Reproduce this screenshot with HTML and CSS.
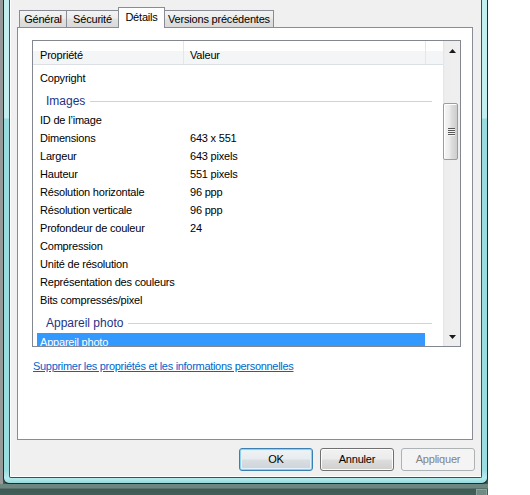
FILE: index.html
```html
<!DOCTYPE html>
<html lang="fr">
<head>
<meta charset="utf-8">
<title>Propriétés</title>
<link rel="stylesheet" href="styles.css">
</head>
<body>
<div class="stage">
  <div class="top">
    <div class="desk"></div>
    <div class="window">
      <div class="dialog">
        <div class="tabs">
          <div class="tab w-gen">Général</div>
          <div class="tab w-sec">Sécurité</div>
          <div class="tab sel w-det">Détails</div>
          <div class="tab w-ver">Versions précédentes</div>
        </div>
        <div class="panel">
          <div class="list">
            <div class="list-main">
              <div class="header">
                <div class="hcell c1">Propriété</div>
                <div class="hcell c2">Valeur</div>
                <div class="hcell c3"></div>
              </div>
              <div class="rows">
                <div class="row"><span class="p">Copyright</span><span class="v"></span></div>
                <div class="group"><span class="gtext">Images</span><span class="gline"></span></div>
                <div class="row"><span class="p">ID de l’image</span><span class="v"></span></div>
                <div class="row"><span class="p">Dimensions</span><span class="v">643 x 551</span></div>
                <div class="row"><span class="p">Largeur</span><span class="v">643 pixels</span></div>
                <div class="row"><span class="p">Hauteur</span><span class="v">551 pixels</span></div>
                <div class="row"><span class="p">Résolution horizontale</span><span class="v">96 ppp</span></div>
                <div class="row"><span class="p">Résolution verticale</span><span class="v">96 ppp</span></div>
                <div class="row"><span class="p">Profondeur de couleur</span><span class="v">24</span></div>
                <div class="row"><span class="p">Compression</span><span class="v"></span></div>
                <div class="row"><span class="p">Unité de résolution</span><span class="v"></span></div>
                <div class="row"><span class="p">Représentation des couleurs</span><span class="v"></span></div>
                <div class="row"><span class="p">Bits compressés/pixel</span><span class="v"></span></div>
                <div class="group"><span class="gtext">Appareil photo</span><span class="gline"></span></div>
                <div class="row selected"><span class="p">Appareil photo</span><span class="v"></span></div>
              </div>
            </div>
            <div class="scrollbar">
              <div class="sbtn up"><svg width="7" height="4" viewBox="0 0 7 4"><polygon points="3.5,0 7,4 0,4" fill="#1a1a1a"/></svg></div>
              <div class="thumb">
                <div class="grip"><i></i><i></i><i></i><i></i></div>
              </div>
              <div class="track-fill"></div>
              <div class="sbtn down"><svg width="7" height="4" viewBox="0 0 7 4"><polygon points="0,0 7,0 3.5,4" fill="#1a1a1a"/></svg></div>
            </div>
          </div>
          <a class="link" href="#">Supprimer les propriétés et les informations personnelles</a>
        </div>
        <div class="buttons">
          <div class="btn default">OK</div>
          <div class="btn">Annuler</div>
          <div class="btn disabled">Appliquer</div>
        </div>
      </div>
    </div>
    <div class="blank"></div>
  </div>
  <div class="taskbar"><div class="tb-square"></div></div>
</div>
</body>
</html>
```

FILE: styles.css
```css
* { box-sizing: border-box; }
html, body { margin: 0; padding: 0; }
body {
  width: 530px;
  height: 495px;
  overflow: hidden;
  background: #ffffff;
  font-family: "Liberation Sans", Arial, sans-serif;
  font-size: 11px;
  color: #000;
}
.stage { width: 530px; height: 495px; display: flex; flex-direction: column; }
.top { display: flex; height: 484px; background: #3c5a53; }
.desk { width: 3px; background: #979999; }
.blank { flex: 1; background: #ffffff; }

.window {
  width: 485px;
  height: 484px;
  border: 1px solid #1f2d2d;
  border-top: none;
  border-radius: 0 0 6px 6px;
  padding: 0 5px 5px 5px;
  background: linear-gradient(to bottom, #c3eef0 0, #c3eef0 118px, #98dcdf 119px, #9adde0 470px, #b6ecee 478px, #8fd6da 484px);
  display: flex;
}
.dialog {
  flex: 1;
  border: 1px solid #3e4d55;
  border-top: none;
  border-radius: 0 0 2px 2px;
  background: #f0f0f0;
  box-shadow: inset 1px 0 0 #ffffff, inset 0 -1px 0 #ffffff;
  display: flex;
  flex-direction: column;
}

/* tabs */
.tabs {
  height: 28px;
  display: flex;
  align-items: flex-end;
  padding-left: 9px;
  position: relative;
  z-index: 1;
}
.tab {
  height: 18px;
  border: 1px solid #898c95;
  margin-left: -1px;
  line-height: 16px;
  text-align: center;
  background: linear-gradient(to bottom, #f3f3f3 0, #ececec 45%, #e0e0e0 55%, #dadada 100%);
  white-space: nowrap;
  letter-spacing: -0.2px;
}
.tab:first-child { margin-left: 0; }
.tab.sel {
  height: 21px;
  border-bottom: none;
  background: #ffffff;
  padding-top: 1px;
  position: relative;
  z-index: 2;
}
.w-gen { width: 48px; }
.w-sec { width: 53px; }
.w-det { width: 47px; }
.w-ver { width: 110px; }

/* panel */
.panel {
  margin: -1px 8px 0 7px;
  height: 413px;
  border: 1px solid #898c95;
  background: #ffffff;
  padding: 12px 0 0 14px;
  display: flex;
  flex-direction: column;
  align-items: flex-start;
}
.list {
  width: 429px;
  height: 307px;
  border: 1px solid #828790;
  background: #fff;
  display: flex;
}
.list-main { width: 410px; height: 305px; overflow: hidden; }

.header {
  height: 24px;
  display: flex;
  border-bottom: 1px solid #dcdfe4;
  background: linear-gradient(to bottom, #ffffff 0, #ffffff 10px, #f4f5f7 10px, #f4f5f7 100%);
}
.hcell {
  height: 23px;
  padding-top: 6px;
  line-height: 16px;
  letter-spacing: -0.2px;
  white-space: nowrap;
}
.hcell.c1 { width: 151px; padding-left: 7px; border-right: 1px solid #e3e6ea; }
.hcell.c2 { width: 242px; padding-left: 6px; border-right: 1px solid #e3e6ea; }
.hcell.c3 { flex: 1; }

.rows { padding-top: 4px; }
.row {
  height: 18px;
  width: 388px;
  margin-left: 4px;
  display: grid;
  grid-template-columns: 150px 1fr;
  line-height: 18px;
  letter-spacing: -0.2px;
  white-space: nowrap;
}
.row .p, .row .v { padding-left: 3px; overflow: hidden; }
.row.selected { background: #3399ff; color: #ffffff; }

.group {
  height: 24px;
  width: 395px;
  margin-left: 4px;
  display: flex;
  align-items: flex-start;
  padding-left: 9px;
}
.gtext {
  padding-top: 7px;
  line-height: 14px;
  font-size: 12px;
  color: #1e3287;
  white-space: nowrap;
}
.gline {
  flex: 1;
  height: 1px;
  margin-top: 14px;
  margin-left: 5px;
  background: #cdd3de;
}

/* scrollbar */
.scrollbar {
  width: 17px;
  height: 305px;
  background: linear-gradient(to right, #e4e4e4 0, #eeeeee 2px, #efefef 100%);
  display: flex;
  flex-direction: column;
}
.sbtn { height: 17px; display: flex; justify-content: center; }
.sbtn.up { padding-top: 8px; padding-left: 1px; }
.sbtn.down { padding-top: 6px; padding-left: 1px; }
.sbtn svg { display: block; }
.thumb {
  margin-top: 45px;
  width: 15px;
  height: 57px;
  border: 1px solid #9c9c9c;
  border-radius: 2px;
  background: linear-gradient(to right, #f6f6f6 0, #ececec 40%, #dcdcdc 60%, #cdcdcd 100%);
  box-shadow: inset 1px 1px 0 #ffffff;
  display: flex;
  align-items: center;
  justify-content: center;
}
.grip { display: flex; flex-direction: column; gap: 1px; padding-left: 1px; }
.grip i {
  display: block;
  width: 7px;
  height: 1px;
  background: #575757;
  box-shadow: 0 1px 0 #f4f4f4;
}
.track-fill { flex: 1; }

.link {
  margin-top: 13px;
  margin-left: 1px;
  line-height: 13px;
  color: #0066cc;
  text-decoration: underline;
  letter-spacing: -0.3px;
  white-space: nowrap;
}

/* buttons */
.buttons {
  margin-top: 8px;
  height: 23px;
  display: flex;
  justify-content: flex-end;
  gap: 7px;
  padding-right: 6px;
}
.btn {
  width: 74px;
  height: 23px;
  border: 1px solid #707070;
  border-radius: 3px;
  background: linear-gradient(to bottom, #f2f2f2 0, #ebebeb 48%, #dddddd 52%, #cfcfcf 100%);
  box-shadow: inset 0 0 0 1px #fcfcfc;
  text-align: center;
  line-height: 21px;
  letter-spacing: -0.2px;
}
.btn.default {
  border-color: #3c7fb1;
  box-shadow: inset 0 0 0 1px #8ed0f0, inset 0 0 0 2px #e2f2fb;
  background: linear-gradient(to bottom, #f1f3f5 0, #e8ecef 48%, #d9dee3 52%, #cdd3d8 100%);
}
.btn.disabled {
  border-color: #adb2b5;
  background: #f4f4f4;
  box-shadow: none;
  color: #838383;
}

.taskbar {
  width: 488px;
  height: 11px;
  background: linear-gradient(to bottom, #6d8780 0, #6d8780 4px, #3d5b54 5px, #42605a 100%);
  display: flex;
  justify-content: flex-end;
  align-items: flex-end;
  padding-right: 1px;
}
.tb-square { width: 11px; height: 6px; background: #6f8b84; border: 1px solid #8aa39c; border-bottom: none; }
```
